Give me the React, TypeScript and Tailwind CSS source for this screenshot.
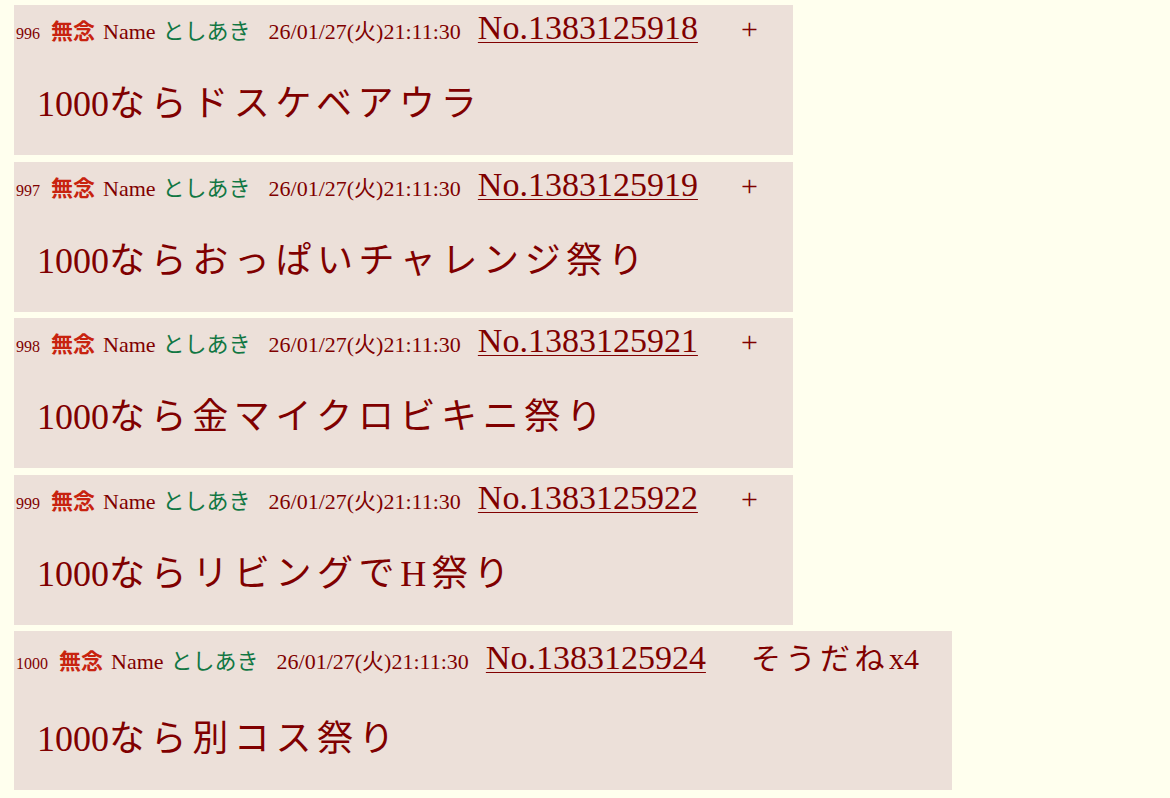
import React from "react";

type Post = {
  idx: string;
  no: string;
  body: string;
  sodane?: string;
  wide?: boolean;
};

const posts: Post[] = [
  { idx: "996", no: "No.1383125918", body: "ならドスケベアウラ" },
  { idx: "997", no: "No.1383125919", body: "ならおっぱいチャレンジ祭り" },
  { idx: "998", no: "No.1383125921", body: "なら金マイクロビキニ祭り" },
  { idx: "999", no: "No.1383125922", body: "ならリビングでH祭り" },
  { idx: "1000", no: "No.1383125924", body: "なら別コス祭り", sodane: "そうだね", wide: true },
];

const font = { fontFamily: '"Liberation Serif", "Noto Sans CJK JP", serif' };

function PostBox({ p }: { p: Post }) {
  return (
    <div
      className={
        "bg-[#ECE0D9] text-[#800000] flex flex-col " +
        (p.wide ? "w-[938px] h-[159px] pt-[10px]" : "w-[779px] h-[150px] pt-[6px]")
      }
    >
      <div className="flex items-baseline pl-[2px] h-[33px]">
        <span className="text-[16px] leading-none">{p.idx}</span>
        <span className="ml-[11px] text-[22px] leading-none font-bold text-[#C8230F]">無念</span>
        <span className="ml-[8px] text-[22px] leading-none">Name</span>
        <span className="ml-[7px] text-[22px] leading-none text-[#117743]">としあき</span>
        <span className="ml-[18px] text-[22px] leading-none">26/01/27(火)21:11:30</span>
        <span className="ml-[17px] text-[34px] leading-none underline decoration-1 underline-offset-[3px]">{p.no}</span>
        {p.sodane ? (
          <span className="ml-[45px] text-[30px] leading-none">
            <span className="tracking-[4.5px]">{p.sodane}</span>x4
          </span>
        ) : (
          <span className="ml-[43px] text-[30px] leading-none">+</span>
        )}
      </div>
      <div className={"pl-[23px] text-[36px] leading-[36px] " + (p.wide ? "mt-[47px]" : "mt-[42px]")}>
        1000<span className="tracking-[5.6px]">{p.body}</span>
      </div>
    </div>
  );
}

export default function App() {
  return (
    <div className="min-h-[798px] w-full bg-[#FFFFEE] pl-[14px] pt-[5px]" style={font}>
      <div className="flex flex-col gap-[6.5px]">
        {posts.map((p) => (
          <PostBox key={p.idx} p={p} />
        ))}
      </div>
    </div>
  );
}
